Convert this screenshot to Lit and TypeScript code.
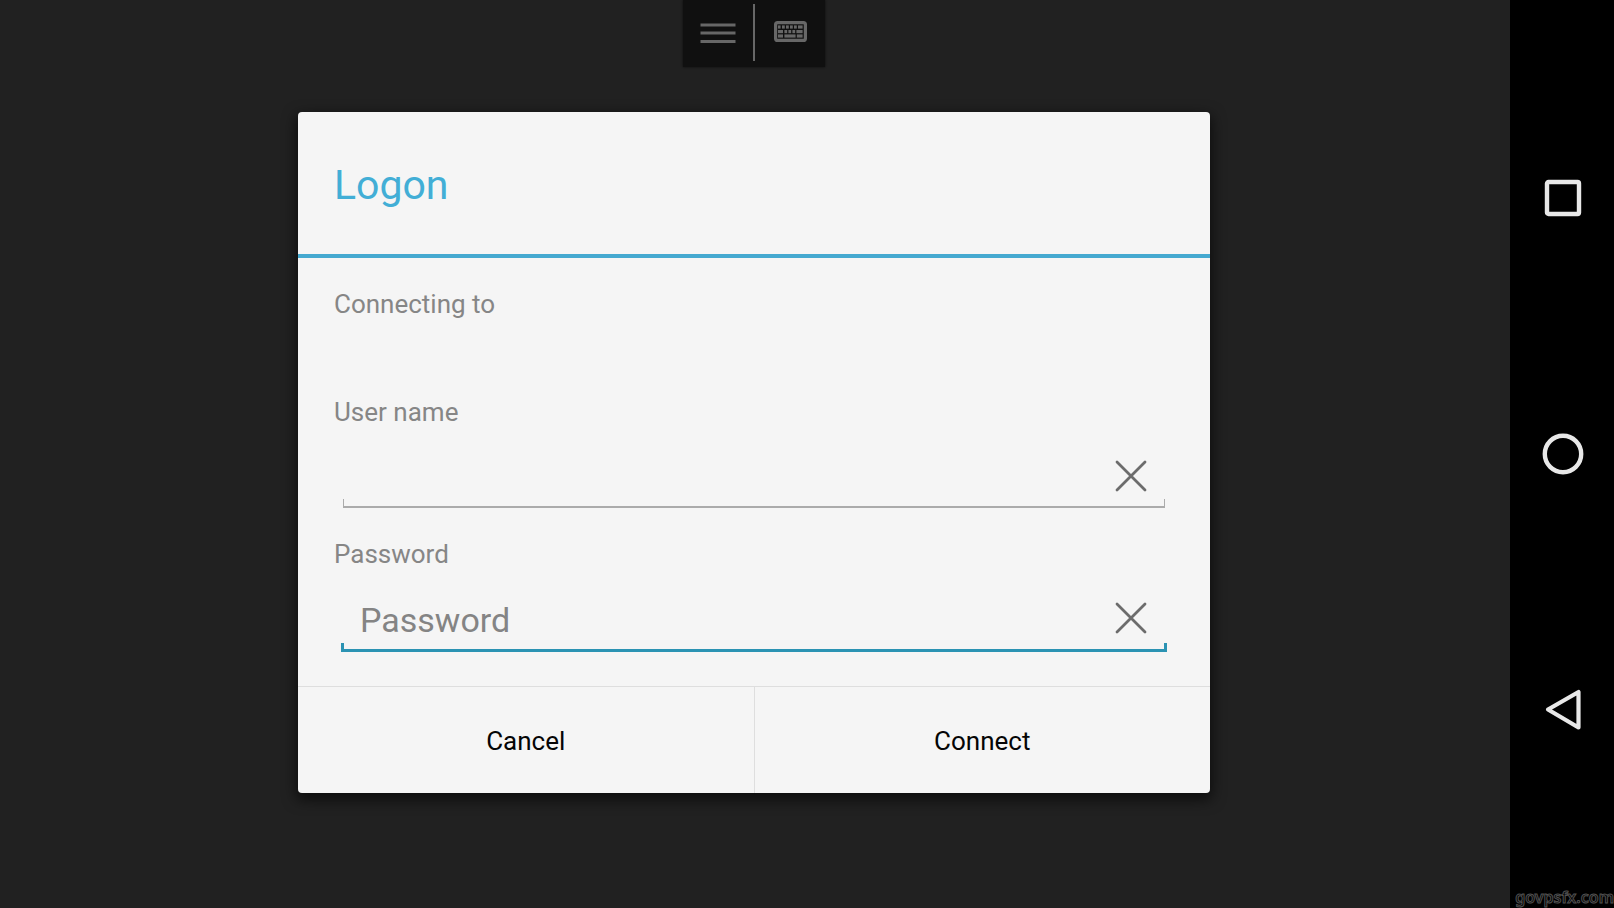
import { LitElement, html, css, svg } from "lit";
import { customElement, state } from "lit/decorators.js";

const keyRows = [
  { y: 4.4, keys: [[4, 2.6], [8, 2.8], [12, 2.8], [16, 2.8], [20, 2.8], [24, 4.6]] },
  { y: 9, keys: [[4, 5], [10.4, 2.8], [14.4, 2.8], [18.4, 2.8], [22.4, 6.2]] },
  { y: 13.4, keys: [[4, 5], [10.4, 11.2], [22.8, 5.8]] },
];

@customElement("app-root")
export class AppRoot extends LitElement {
  @state() private userName = "";
  @state() private password = "";

  static styles = css`
    :host {
      display: flex;
      min-height: 100vh;
      background: #212121;
      font-family: Roboto, "Noto Sans", sans-serif;
      color: #868686;
    }
    * {
      box-sizing: border-box;
    }
    button {
      display: flex;
      align-items: center;
      justify-content: center;
      margin: 0;
      padding: 0;
      border: 0;
      background: none;
      font: inherit;
      color: inherit;
      cursor: pointer;
    }
    svg {
      display: block;
      fill: none;
      stroke: currentColor;
    }
    .session {
      flex: 1;
      min-width: 0;
      display: flex;
      flex-direction: column;
      align-items: center;
      padding: 0 2px 40px 0;
    }
    .toolbar {
      display: flex;
      align-items: center;
      height: 67px;
      padding-bottom: 2px;
      background: #101010;
      box-shadow: 0 0 2px #0a0a0a;
      color: #676767;
    }
    .tool {
      width: 70px;
      height: 64px;
    }
    .separator {
      width: 2px;
      height: 57px;
      background: #676767;
    }
    .dialog {
      width: 912px;
      max-width: calc(100% - 32px);
      margin-top: 45px;
      border-radius: 4px;
      background: #f5f5f5;
      box-shadow: 0 5px 14px 2px rgba(0, 0, 0, 0.6);
      overflow: hidden;
    }
    .title {
      margin: 0;
      padding: 46px 36px 42px;
      border-bottom: 4px solid #45a9d0;
      font-size: 41px;
      line-height: 54px;
      font-weight: 400;
      color: #42aed6;
    }
    .body {
      padding: 30px 36px;
      font-size: 26px;
      line-height: 32px;
    }
    .label {
      display: block;
    }
    .host-name {
      display: block;
      min-height: 76px;
    }
    .field {
      --line: #ababab;
      --weight: 2px;
      --tick: 1px;
      display: flex;
      height: 82px;
      margin: 0 7px 28px;
      padding-top: 16px;
      border: 2px solid transparent;
      border-top: 0;
      background:
        linear-gradient(var(--line), var(--line)) left bottom / 100% var(--weight) no-repeat,
        linear-gradient(var(--line), var(--line)) left bottom / var(--tick) 9px no-repeat,
        linear-gradient(var(--line), var(--line)) right bottom / var(--tick) 9px no-repeat;
    }
    .field.active {
      --line: #2b93b3;
      --weight: 3px;
      --tick: 3px;
      margin-bottom: 4px;
      background-origin: border-box;
    }
    .input {
      flex: 1;
      min-width: 0;
      margin: 0;
      padding: 4px 0 0 17px;
      border: 0;
      outline: 0;
      background: none;
      font: inherit;
      font-size: 34px;
      color: #212121;
    }
    .input::placeholder {
      color: #848484;
      opacity: 1;
    }
    .clear {
      width: 68px;
      color: #6c6c6c;
    }
    .actions {
      display: flex;
      border-top: 1px solid #dedede;
    }
    .action {
      flex: 1;
      height: 106px;
      padding-top: 2px;
      font-size: 26px;
      color: #050505;
    }
    .action + .action {
      border-left: 1px solid #dedede;
    }
    .system {
      width: 104px;
      display: grid;
      grid-template-rows: 1fr auto 1fr;
      background: #000;
      color: #e8e8e8;
    }
    .keys {
      grid-row: 2;
      padding-left: 2px;
    }
    .key {
      width: 100%;
      height: 256px;
    }
    .watermark {
      grid-row: 3;
      align-self: end;
      justify-self: end;
      font-family: "Noto Sans", sans-serif;
      font-size: 16px;
      line-height: 22px;
      font-weight: 600;
      color: #000;
      -webkit-text-stroke: 1px #505050;
    }
  `;

  private clearButton(label: string, clear: () => void) {
    return html`<button class="clear" type="button" aria-label=${label} @click=${clear}>
      <svg width="32" height="32" viewBox="0 0 32 32" stroke-width="2.8" stroke-linecap="round">
        <path d="M2 2L30 30M30 2L2 30" />
      </svg>
    </button>`;
  }

  render() {
    return html`
      <main class="session">
        <div class="toolbar">
          <button class="tool" aria-label="Menu">
            <svg width="36" height="22" viewBox="0 0 36 22" stroke-width="3">
              <path d="M0.5 3H35.5M0.5 11H35.5M0.5 19.5H35.5" />
            </svg>
          </button>
          <span class="separator"></span>
          <button class="tool" aria-label="Keyboard">
            <svg width="33" height="24" viewBox="0 0 33 24">
              <rect x="1.6" y="1.6" width="29.8" height="17.8" rx="2" stroke-width="3.2" />
              ${keyRows.map(({ y, keys }) =>
                keys.map(
                  ([x, w]) =>
                    svg`<rect x=${x} y=${y} width=${w} height="3.2" fill="currentColor" stroke="none" />`
                )
              )}
            </svg>
          </button>
        </div>
        <form class="dialog" @submit=${(e: Event) => e.preventDefault()}>
          <h1 class="title">Logon</h1>
          <div class="body">
            <label class="label" for="host">Connecting to</label>
            <output class="host-name" id="host"></output>
            <label class="label" for="user">User name</label>
            <div class="field">
              <input
                class="input"
                id="user"
                autocomplete="off"
                .value=${this.userName}
                @input=${(e: Event) => (this.userName = (e.target as HTMLInputElement).value)}
              />
              ${this.clearButton("Clear user name", () => (this.userName = ""))}
            </div>
            <label class="label" for="password">Password</label>
            <div class="field active">
              <input
                class="input"
                id="password"
                type="password"
                placeholder="Password"
                .value=${this.password}
                @input=${(e: Event) => (this.password = (e.target as HTMLInputElement).value)}
              />
              ${this.clearButton("Clear password", () => (this.password = ""))}
            </div>
          </div>
          <div class="actions">
            <button class="action" type="button">Cancel</button>
            <button class="action" type="submit">Connect</button>
          </div>
        </form>
      </main>
      <nav class="system">
        <div class="keys">
          <button class="key" aria-label="Recent apps">
            <svg width="38" height="38" viewBox="0 0 38 38" stroke-width="4.4">
              <rect x="3" y="3" width="32" height="32" rx="1.5" />
            </svg>
          </button>
          <button class="key" aria-label="Home">
            <svg width="42" height="42" viewBox="0 0 42 42" stroke-width="4.4">
              <circle cx="21" cy="21" r="18.2" />
            </svg>
          </button>
          <button class="key" aria-label="Back">
            <svg width="38" height="42" viewBox="0 0 38 42" stroke-width="4.2" stroke-linejoin="round">
              <path d="M34.5 3V38.5L4 20.5Z" />
            </svg>
          </button>
        </div>
        <span class="watermark">govpsfx.com</span>
      </nav>
    `;
  }
}
